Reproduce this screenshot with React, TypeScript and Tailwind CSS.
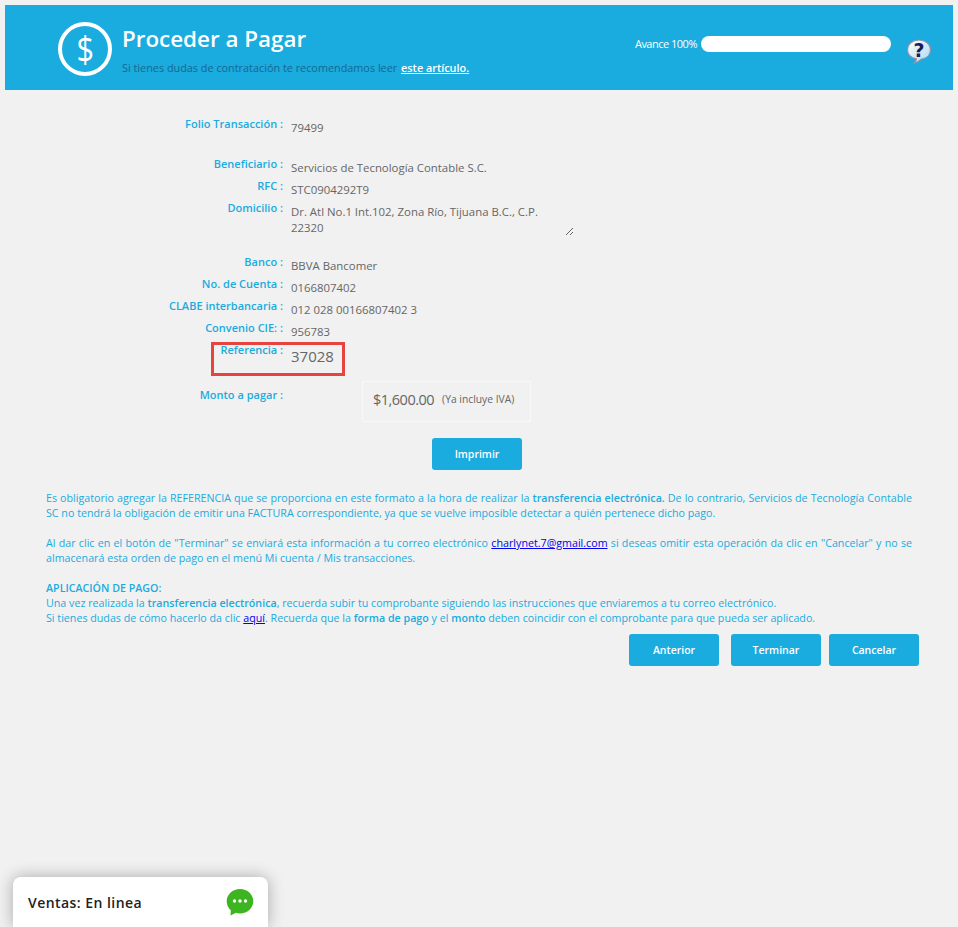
const labelCls = "w-[283px] shrink-0 text-right text-[11px] font-semibold leading-[14px] text-[#1aabdf]";
const valueCls = "ml-2 text-[11.4px] leading-[16px] text-[#666666]";

const Row = ({ label, value, className = "" }: { label: string; value: string; className?: string }) => (
  <div className={`flex h-[22px] ${className}`}>
    <div className={labelCls}>{label}</div>
    <div className={`${valueCls} pt-[3px]`}>{value}</div>
  </div>
);

const HelpIcon = () => (
  <svg width="26" height="26" viewBox="0 0 26 26">
    <defs>
      <linearGradient id="bubble" x1="0" y1="0" x2="1" y2="1">
        <stop offset="0" stopColor="#ffffff" />
        <stop offset="1" stopColor="#a9d8f2" />
      </linearGradient>
    </defs>
    <path
      d="M13 2C19.5 2 24.5 6 24.5 11.5C24.5 16.6 21 20.4 15.5 21C14 22.6 11 24.6 8 25.4C9.4 23.8 10.4 22.4 10.4 20.9C5.2 20 1.5 16.6 1.5 11.5C1.5 6 6.5 2 13 2Z"
      fill="url(#bubble)"
      stroke="#8d93ad"
      strokeWidth="1.2"
    />
    <text x="13" y="18.5" textAnchor="middle" fontSize="19" fontWeight="900" fill="#1c1c54" fontFamily="'DejaVu Sans', sans-serif">?</text>
  </svg>
);

const Button = ({ children, className = "" }: { children: string; className?: string }) => (
  <button className={`h-8 w-[90px] rounded-[3px] bg-[#1aabdf] pt-px text-[10.5px] font-semibold text-white ${className}`}>
    {children}
  </button>
);

export default function App() {
  return (
    <div className="relative h-[927px] overflow-hidden bg-[#f1f1f1] pt-[5px] font-['Open_Sans',sans-serif]">
      <header className="mx-[5px] flex h-[85px] items-start justify-between bg-[#1aabdf]">
        <div className="ml-[53px] flex pt-[17px]">
          <div className="flex h-[54px] w-[54px] items-center justify-center rounded-full border-[4px] border-white text-white">
            <span className="scale-x-[0.85] text-[36px] leading-none">$</span>
          </div>
          <div className="ml-[10px]">
            <h1 className="text-[22.4px] font-semibold leading-[34px] text-white">Proceder a Pagar</h1>
            <p className="mt-[5px] text-[10.85px] leading-[14px] text-[#17678f]">
              Si tienes dudas de contratación te recomendamos leer{" "}
              <a className="ml-[1px] font-semibold text-white underline">este artículo.</a>
            </p>
          </div>
        </div>
        <div className="mr-[21px] flex items-start pt-[31px]">
          <span className="mr-1 text-[11px] leading-4 tracking-[-0.5px] text-white">Avance 100%</span>
          <div className="h-4 w-[190px] rounded-full bg-white" />
          <div className="ml-[15px] mt-[2px]">
            <HelpIcon />
          </div>
        </div>
      </header>

      <main className="pt-[27px]">
        <Row label="Folio Transacción :" value="79499" />
        <Row label="Beneficiario :" value="Servicios de Tecnología Contable S.C." className="mt-[18px]" />
        <Row label="RFC :" value="STC0904292T9" />
        <div className="flex h-[48px]">
          <div className={labelCls}>Domicilio :</div>
          <textarea
            readOnly
            value="Dr. Atl No.1 Int.102, Zona Río, Tijuana B.C., C.P. 22320"
            className={`${valueCls} h-[35px] w-[283px] pr-4 pt-[3px] outline-none`}
          />
        </div>
        <Row label="Banco :" value="BBVA Bancomer" className="mt-[6px]" />
        <Row label="No. de Cuenta :" value="0166807402" />
        <Row label="CLABE interbancaria :" value="012 028 00166807402 3" />
        <Row label="Convenio CIE: :" value="956783" />
        <div className="-mt-px ml-[211px] flex h-[34px] w-[134px] border-[3px] border-[#e8443f]">
          <div className="-mt-[2px] w-[69px] shrink-0 text-right text-[11px] font-semibold leading-[14px] text-[#1aabdf]">Referencia :</div>
          <div className="ml-2 text-[15px] leading-[22px] text-[#666666]">37028</div>
        </div>
        <div className="mt-[5px] flex h-[41px]">
          <div className={`${labelCls} pt-[7px]`}>Monto a pagar :</div>
          <div className="ml-[79px] flex h-[41px] w-[169px] items-center border border-[#f8f8f8] pb-1 pl-[10px]">
            <span className="text-[14.5px] font-medium tracking-[-0.5px] text-[#666666]">$1,600.00</span>
            <span className="ml-2 text-[10.3px] text-[#666666]">(Ya incluye IVA)</span>
          </div>
        </div>
        <div className="ml-[432px] mt-4">
          <Button>Imprimir</Button>
        </div>

        <div className="mx-[46px] mt-[21px] text-justify text-[10.7px] leading-[15px] text-[#1aabdf]">
          <p>
            Es obligatorio agregar la REFERENCIA que se proporciona en este formato a la hora de realizar la{" "}
            <b className="font-semibold">transferencia electrónica.</b> De lo contrario, Servicios de Tecnología Contable SC no tendrá la obligación de emitir una FACTURA correspondiente, ya que se vuelve imposible detectar a quién pertenece dicho pago.
          </p>
          <p className="mt-[15px]">
            Al dar clic en el botón de "Terminar" se enviará esta información a tu correo electrónico{" "}
            <a className="text-[#0000ee] underline">charlynet.7@gmail.com</a> si deseas omitir esta operación da clic en "Cancelar" y no se almacenará esta orden de pago en el menú Mi cuenta / Mis transacciones.
          </p>
          <p className="mt-[15px] text-left">
            <b className="font-semibold">APLICACIÓN DE PAGO:</b>
            <br />
            Una vez realizada la <b className="font-semibold">transferencia electrónica</b>, recuerda subir tu comprobante siguiendo las instrucciones que enviaremos a tu correo electrónico.
            <br />
            Si tienes dudas de cómo hacerlo da clic <a className="text-[#0000ee] underline">aquí</a>. Recuerda que la <b className="font-semibold">forma de pago</b> y el <b className="font-semibold">monto</b> deben coincidir con el comprobante para que pueda ser aplicado.
          </p>
        </div>

        <div className="mr-[39px] mt-[8px] flex justify-end">
          <Button>Anterior</Button>
          <Button className="ml-3">Terminar</Button>
          <Button className="ml-2">Cancelar</Button>
        </div>
      </main>

      <div className="absolute bottom-0 left-[13px] flex h-[50px] w-[255px] items-start justify-between rounded-t-[8px] bg-white pl-[15px] pr-[14px] pt-[11px] shadow-[0_0_16px_rgba(0,0,0,0.3)]">
        <span className="mt-[5px] text-[14px] font-semibold leading-5 tracking-[0.45px] text-[#222222]">Ventas: En linea</span>
        <svg width="28" height="28" viewBox="0 0 28 28">
          <path d="M14 1C21.4 1 27.3 6.6 27.3 13.2C27.3 20 21.4 25.4 14 25.4C12.6 25.4 11.2 25.2 10 24.8L4.5 27.5L4.8 22.2C2.2 20 .7 16.8 .7 13.2C.7 6.6 6.6 1 14 1Z" fill="#3cb521" />
          <circle cx="8.5" cy="13" r="1.7" fill="#fff" />
          <circle cx="14" cy="13" r="1.7" fill="#fff" />
          <circle cx="19.5" cy="13" r="1.7" fill="#fff" />
        </svg>
      </div>
    </div>
  );
}
